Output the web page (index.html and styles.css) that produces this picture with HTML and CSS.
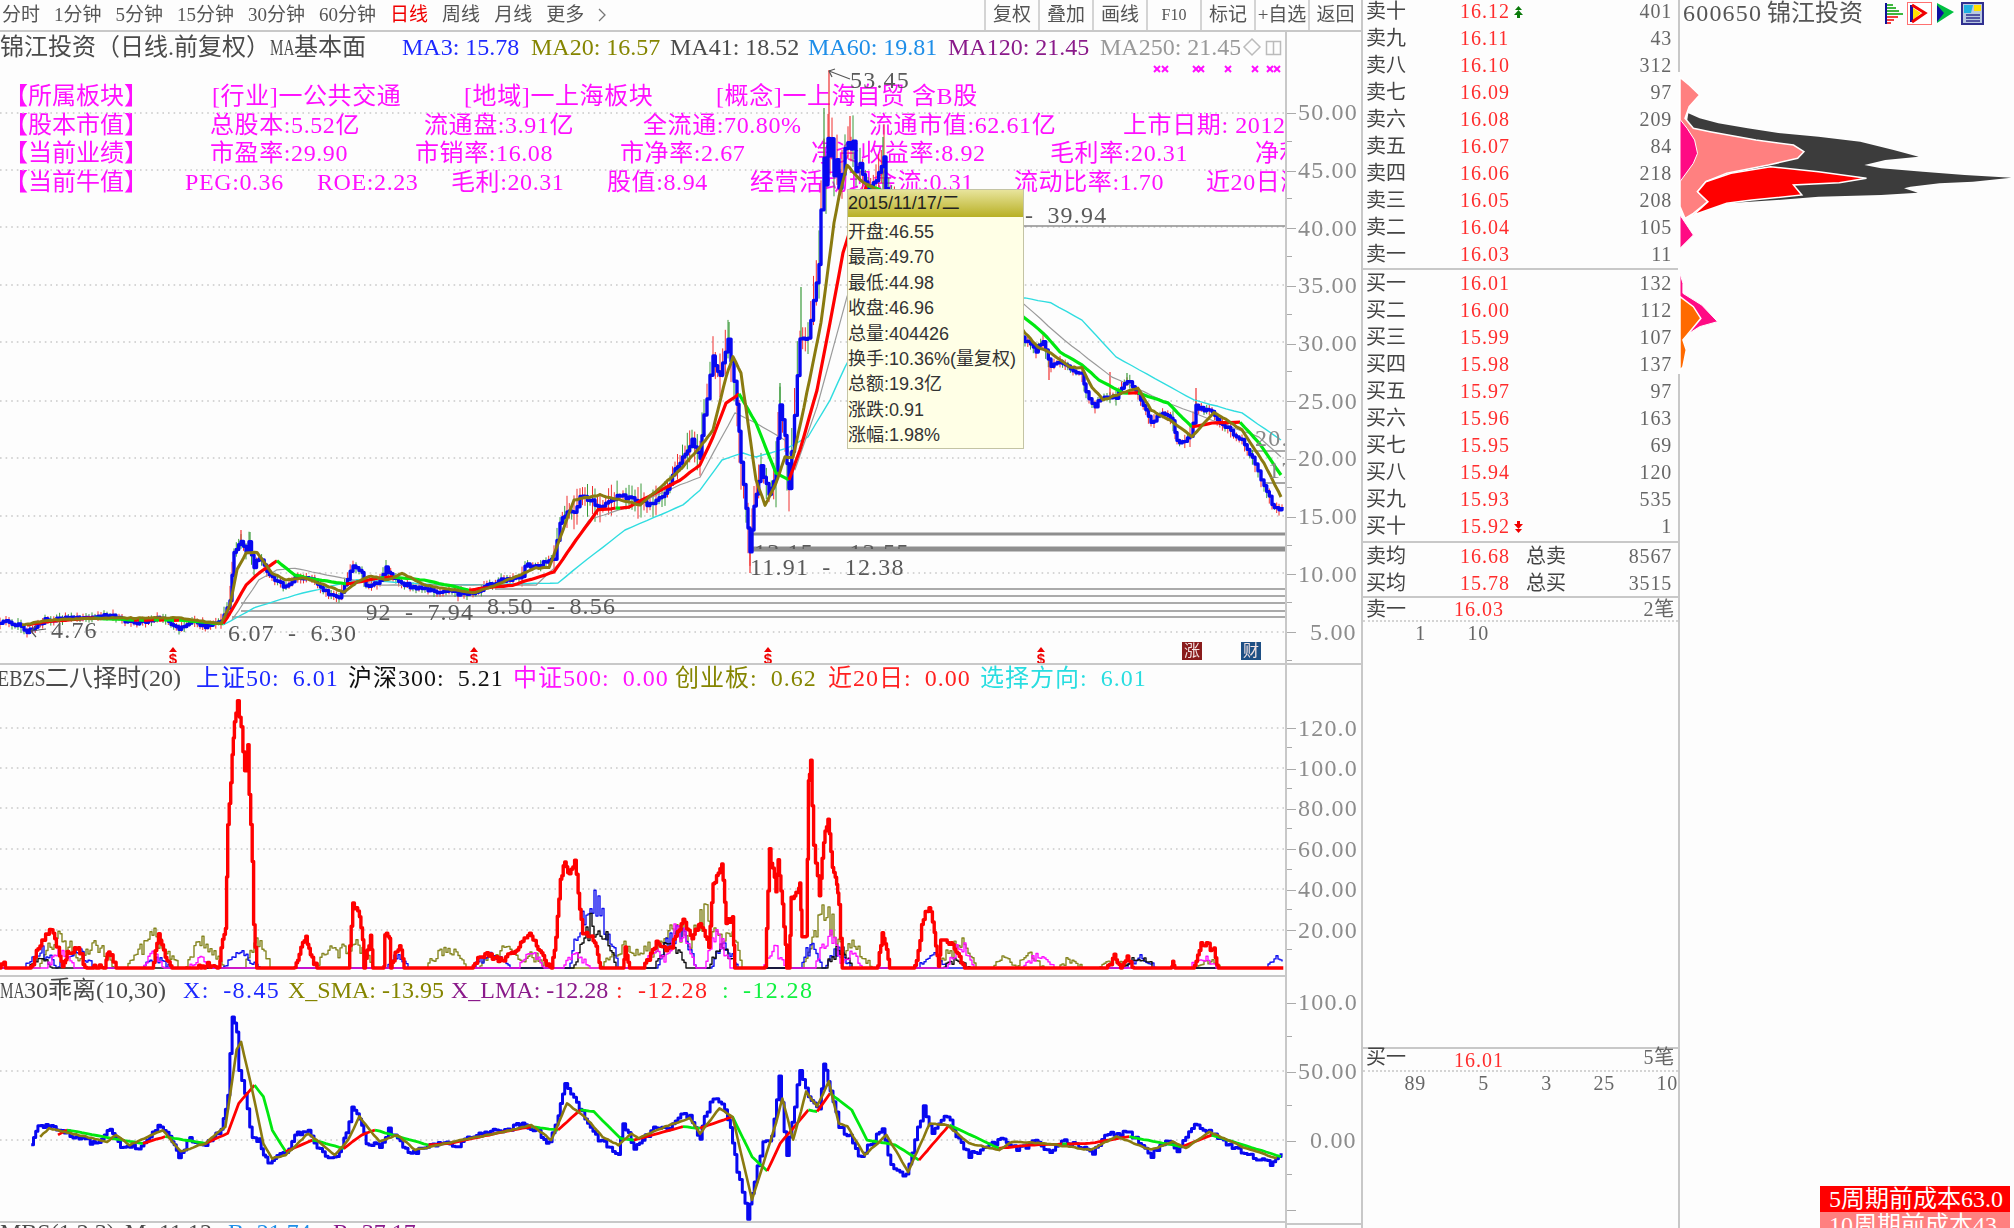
FILE: index.html
```html
<!DOCTYPE html>
<html lang="zh-CN">
<head>
<meta charset="utf-8">
<title>锦江投资 600650</title>
<link rel="stylesheet" href="styles.css">
</head>
<body>
<div class="app">
  <div class="left">
    <header class="toolbar">
      <nav class="periods">
        <span>分时</span><span>1分钟</span><span>5分钟</span><span>15分钟</span><span>30分钟</span><span>60分钟</span><span class="on">日线</span><span>周线</span><span>月线</span><span>更多</span><svg class="chev" viewBox="0 0 8 14"><path d="M1 1l6 6-6 6" fill="none" stroke="#777" stroke-width="1.300"/></svg>
      </nav>
      <nav class="tools">
        <span>复权</span><span>叠加</span><span>画线</span><span class="f10">F10</span><span>标记</span><span>+自选</span><span>返回</span>
      </nav>
    </header>

    <section class="pane p-main">
      <div class="plot">
        <div class="legend lg-main">
          <span class="c-ink">锦江投资（日线.前复权）<b class="narrow n-ma">MA</b>基本面</span>
          <span class="c-blue">MA3: 15.78</span>
          <span class="c-olive">MA20: 16.57</span>
          <span class="c-ink">MA41: 18.52</span>
          <span class="c-sky">MA60: 19.81</span>
          <span class="c-purple">MA120: 21.45</span>
          <span class="c-gray">MA250: 21.45</span>
        </div>
        <div class="info">
          <div class="info-row r1"><span>【所属板块】</span><span>[行业]一公共交通</span><span>[地域]一上海板块</span><span>[概念]一上海自贸 含B股</span></div>
          <div class="info-row r2"><span>【股本市值】</span><span>总股本:5.52亿</span><span>流通盘:3.91亿</span><span>全流通:70.80%</span><span>流通市值:62.61亿</span><span>上市日期: 2012</span></div>
          <div class="info-row r3"><span>【当前业绩】</span><span>市盈率:29.90</span><span>市销率:16.08</span><span>市净率:2.67</span><span>净资收益率:8.92</span><span>毛利率:20.31</span><span>净利</span></div>
          <div class="info-row r4"><span>【当前牛值】</span><span>PEG:0.36</span><span>ROE:2.23</span><span>毛利:20.31</span><span>股值:8.94</span><span>经营活动现金流:0.31</span><span>流动比率:1.70</span><span>近20日涨</span></div>
        </div>
        <svg class="chart" id="main-chart" viewBox="0 32 1285 631"></svg>

        <span class="anno a-53">53.45</span>
        <span class="anno a-476">4.76</span>
        <span class="anno a-607">6.07 - 6.30</span>
        <span class="anno a-850">8.50 - 8.56</span>
        <span class="anno a-792">7.92 - 7.94</span>
        <span class="anno a-1315">13.15 - 13.55</span>
        <span class="anno a-1191">11.91 - 12.38</span>
        <span class="anno a-3994">- 39.94</span>
        <span class="anno a-20">20.</span>
        <span class="anno a-17">17</span>

        <span class="mark m1">$</span><span class="mark m2">$</span><span class="mark m3">$</span><span class="mark m4">$</span>
        <span class="badge b-rise">涨</span><span class="badge b-fin">财</span>

        <div class="tip">
          <div class="tip-head">2015/11/17/二</div>
          <div class="tip-body">
            <div>开盘:46.55</div><div>最高:49.70</div><div>最低:44.98</div><div>收盘:46.96</div><div>总量:404426</div><div>换手:10.36%(量复权)</div><div>总额:19.3亿</div><div>涨跌:0.91</div><div>涨幅:1.98%</div>
          </div>
        </div>
      </div>
      <div class="axis ax-main">
        <div class="tick">50.00</div><div class="tick">45.00</div><div class="tick">40.00</div><div class="tick">35.00</div><div class="tick">30.00</div><div class="tick">25.00</div><div class="tick">20.00</div><div class="tick">15.00</div><div class="tick">10.00</div><div class="tick"><i>5.00</i></div>
      </div>
    </section>

    <section class="pane p-ind1">
      <div class="plot">
        <div class="legend lg-ind1">
          <span class="c-ink"><b class="narrow n-ebzs">EBZS</b>二八择时(20)</span>
          <span class="c-blue">上证50: 6.01</span>
          <span class="c-black">沪深300: 5.21</span>
          <span class="c-magenta">中证500: 0.00</span>
          <span class="c-olive">创业板: 0.62</span>
          <span class="c-red">近20日: 0.00</span>
          <span class="c-cyan">选择方向: 6.01</span>
        </div>
        <svg class="chart" id="ind1-chart" viewBox="0 665 1285 310"></svg>
      </div>
      <div class="axis ax-ind1">
        <div class="tick">120.0</div><div class="tick">100.0</div><div class="tick">80.00</div><div class="tick">60.00</div><div class="tick">40.00</div><div class="tick">20.00</div>
      </div>
    </section>

    <section class="pane p-ind2">
      <div class="plot">
        <div class="legend lg-ind2">
          <span class="c-ink"><b class="narrow n-ma">MA</b>30乖离(10,30)</span>
          <span class="c-blue sp">X: -8.45</span>
          <span class="c-olive">X_SMA: -13.95</span>
          <span class="c-purple">X_LMA: -12.28</span>
          <span class="c-red">:</span>
          <span class="c-red sp">-12.28</span>
          <span class="c-green">:</span>
          <span class="c-green sp">-12.28</span>
        </div>
        <svg class="chart" id="ind2-chart" viewBox="0 977 1285 244"></svg>
      </div>
      <div class="axis ax-ind2">
        <div class="tick">100.0</div><div class="tick">50.00</div><div class="tick"><i>0.00</i></div><div class="tick"></div>
      </div>
    </section>

    <section class="pane p-ind3">
      <div class="plot">
        <div class="legend lg-ind3">
          <span class="c-ink">MBS(1,2,3)</span>
          <span class="c-ink">M: 11.12</span>
          <span class="c-sky">B: 21.74</span>
          <span class="c-purple">R: 37.17</span>
        </div>
      </div>
      <div class="axis ax-ind3"></div>
    </section>
  </div>

  <aside class="book">
    <div class="asks">
      <div class="row"><span>卖十</span><span class="px">16.12<svg class="flag" viewBox="0 0 9 12"><path fill="#0a7a0a" d="M4.500 0L8 4H1zM4.500 4L9 9H6v3H3V9H0z"/></svg></span><span class="qty">401</span></div>
      <div class="row"><span>卖九</span><span class="px">16.11</span><span class="qty">43</span></div>
      <div class="row"><span>卖八</span><span class="px">16.10</span><span class="qty">312</span></div>
      <div class="row"><span>卖七</span><span class="px">16.09</span><span class="qty">97</span></div>
      <div class="row"><span>卖六</span><span class="px">16.08</span><span class="qty">209</span></div>
      <div class="row"><span>卖五</span><span class="px">16.07</span><span class="qty">84</span></div>
      <div class="row"><span>卖四</span><span class="px">16.06</span><span class="qty">218</span></div>
      <div class="row"><span>卖三</span><span class="px">16.05</span><span class="qty">208</span></div>
      <div class="row"><span>卖二</span><span class="px">16.04</span><span class="qty">105</span></div>
      <div class="row"><span>卖一</span><span class="px">16.03</span><span class="qty">11</span></div>
    </div>
    <div class="sep"></div>
    <div class="bids">
      <div class="row"><span>买一</span><span class="px">16.01</span><span class="qty">132</span></div>
      <div class="row"><span>买二</span><span class="px">16.00</span><span class="qty">112</span></div>
      <div class="row"><span>买三</span><span class="px">15.99</span><span class="qty">107</span></div>
      <div class="row"><span>买四</span><span class="px">15.98</span><span class="qty">137</span></div>
      <div class="row"><span>买五</span><span class="px">15.97</span><span class="qty">97</span></div>
      <div class="row"><span>买六</span><span class="px">15.96</span><span class="qty">163</span></div>
      <div class="row"><span>买七</span><span class="px">15.95</span><span class="qty">69</span></div>
      <div class="row"><span>买八</span><span class="px">15.94</span><span class="qty">120</span></div>
      <div class="row"><span>买九</span><span class="px">15.93</span><span class="qty">535</span></div>
      <div class="row"><span>买十</span><span class="px">15.92<svg class="flag" viewBox="0 0 9 12"><path fill="#f00000" d="M3 0h3v3h3L4.500 8 0 3h3zM1 8h7l-3.500 4z"/></svg></span><span class="qty">1</span></div>
    </div>
    <div class="sep"></div>
    <div class="avgs">
      <div class="row avg"><span>卖均</span><span class="px">16.68</span><span>总卖</span><span class="qty">8567</span></div>
      <div class="row avg"><span>买均</span><span class="px">15.78</span><span>总买</span><span class="qty">3515</span></div>
    </div>
    <div class="sep"></div>
    <div class="row queue"><span>卖一</span><span class="px">16.03</span><span class="qty">2笔</span></div>
    <div class="lots"><span>1</span><span>10</span></div>
    <div class="book-gap"></div>
    <div class="sep"></div>
    <div class="row queue queue-b"><span>买一</span><span class="px">16.01</span><span class="qty">5笔</span></div>
    <div class="lots"><span>89</span><span>5</span><span>3</span><span>25</span><span>10</span></div>
  </aside>

  <aside class="side">
    <div class="side-head">
      <span class="code">600650</span><span class="name">锦江投资</span>
      <div class="icons">
        <svg class="i1" viewBox="0 0 18 23"><path fill="none" stroke="#10109a" stroke-width="2" d="M1 1v21"/><path fill="none" stroke="#00a000" stroke-width="1.600" d="M2 3h6M2 6h9M2 9h12M2 12h16"/><path fill="none" stroke="#f00000" stroke-width="1.600" d="M2 15h11M2 18h7M2 21h4"/></svg>
        <svg class="i2" viewBox="0 0 25 23"><rect x=".5" y=".5" width="24" height="22" fill="#fff" stroke="#ff7070"/><path fill="#1010a0" d="M3 3h3v17H3z"/><path fill="#ffe000" d="M6 6l8 5-8 7z"/><path fill="none" stroke="#f00000" stroke-width="3" d="M5 3l13 8-13 9"/></svg>
        <svg class="i3" viewBox="0 0 19 23"><path fill="#00c040" d="M1 1l17 9L1 21z"/><path fill="#1010a0" d="M1 3l7 8-7 9z"/></svg>
        <svg class="i4" viewBox="0 0 23 23"><rect x="1" y="1" width="21" height="21" fill="#b8c8e0" stroke="#303090" stroke-width="2"/><path fill="#ffe000" d="M13 3h7v6h-7z"/><path fill="#20b0e0" d="M3 3h9l-2 8H3z"/><path stroke="#303090" stroke-width="1.500" d="M5 13h14M5 16h14M5 19h14"/></svg>
      </div>
    </div>
    <svg class="profile" viewBox="763.200 216 805.400 906" preserveAspectRatio="none">
      <polygon class="s-dark" points="788,340 815,355 860,370 930,385 1010,400 1100,410 1200,425 1280,450 1340,470 1260,480 1210,495 1250,505 1350,515 1450,525 1562,533 1470,545 1390,550 1320,560 1305,565 1338,578 1250,585 1100,590 1000,600 880,610 800,645 780,400"/>
      <polygon class="s-salmon" points="768,232 790,255 815,285 790,320 780,355 800,385 840,395 950,420 1040,435 1065,455 1050,475 980,495 880,520 830,545 810,575 835,605 800,640 780,655 768,620"/>
      <polygon class="s-pink" points="768,358 785,385 803,420 810,460 800,490 768,545"/>
      <polygon class="s-red" points="985,500 1100,515 1215,535 1150,548 1040,555 1060,585 940,600 880,610 800,645 835,605 810,575 830,545 890,520"/>
      <polygon class="s-pink" points="768,645 800,705 768,745"/>
      <polygon class="s-pink" points="768,820 775,850 775,880 820,915 858,965 815,980 790,1000 780,1005 768,1000"/>
      <polygon class="s-orange" points="768,890 800,920 818,955 785,1005 775,1020 783,1050 775,1100 768,1112"/>
    </svg>
    <div class="cost">
      <div class="cost-a">5周期前成本63.0</div>
      <div class="cost-b">10周期前成本43.</div>
    </div>
  </aside>
</div>
<script src="script.js"></script>
</body>
</html>
```
FILE: styles.css
```css
* { box-sizing: border-box; }
html, body { margin: 0; height: 1228px; overflow: hidden; background: #fdfdfd; }
body {
  font-family: "Liberation Serif", "Noto Sans CJK SC", serif;
  font-size: 24px;
  color: #4a4a4a;
}
.app { display: flex; width: 2014px; height: 1228px; filter: blur(.35px); }
.left { width: 1361px; flex: none; display: flex; flex-direction: column; }

/* toolbar */
.toolbar {
  height: 32px; flex: none; display: flex; justify-content: space-between;
  border-bottom: 2px solid #c8c8c8; font-size: 19px; line-height: 30px; color: #555;
}
.periods { display: flex; gap: 14px; padding-left: 2px; align-items: center; }
.periods .on { color: #f00000; }
.chev { width: 8px; height: 14px; flex: none; }
.tools { display: flex; }
.tools span { width: 54px; border-left: 2px solid #d4d4d4; text-align: center; }
.tools .f10 { font-size: 16px; }
.tools span:last-child { width: 53px; }

/* panes */
.pane { display: flex; flex: none; overflow: hidden; }
.p-main { height: 633px; border-bottom: 2px solid #c8c8c8; }
.p-ind1 { height: 312px; }
.p-ind2 { height: 246px; }
.p-ind3 { flex: 1; min-height: 0; }
.plot { position: relative; width: 1285px; flex: none; overflow: hidden; }
.p-ind1 .plot, .p-ind2 .plot { border-bottom: 2px solid #c8c8c8; }
.axis {
  width: 76px; flex: none; border-left: 2px solid #c8c8c8;
  letter-spacing: 1.2px; color: #8c8c8c; overflow: hidden;
}
.ax-main { padding-top: 52px; }
.ax-ind1 { padding-top: 43px; }
.ax-ind2 .tick:first-child { margin-top: -9px; }
.ax-ind3 { border-top: 2px solid #c8c8c8; }
.tick { position: relative; display: flex; align-items: center; padding-left: 11px; white-space: nowrap; }
.ax-main .tick { height: 57.7px; }
.ax-ind1 .tick { height: 40.4px; }
.ax-ind2 .tick { height: 69px; }
.tick i { font-style: normal; padding-left: 12px; }
.tick::before, .tick::after { content: ""; position: absolute; left: 0; height: 1px; background: #aaa; }
.tick::before { top: 50%; width: 9px; }
.tick::after { bottom: 0; width: 5px; }

/* legends */
.legend { display: flex; height: 30px; line-height: 30px; white-space: nowrap; position: relative; }
.legend span { flex: none; overflow: hidden; }
.narrow { display: inline-block; font-weight: normal; transform-origin: 0 50%; white-space: nowrap; }
.n-ma { width: 24px; transform: scaleX(.63); }
.n-ebzs { width: 48px; transform: scaleX(.83); }
.sp { letter-spacing: 1.4px; word-spacing: 6px; }
.lg-main span:nth-child(1) { width: 402px; }
.lg-main span:nth-child(2) { width: 129px; }
.lg-main span:nth-child(3) { width: 139px; }
.lg-main span:nth-child(4) { width: 138px; }
.lg-main span:nth-child(5) { width: 140px; }
.lg-main span:nth-child(6) { width: 152px; }
.lg-main span:nth-child(7) { width: 140px; }
.lg-ind1 { height: 27px; line-height: 27px; }
.lg-ind1 span { letter-spacing: 1px; word-spacing: 6px; }
.lg-ind1 span:nth-child(1) { width: 196px; letter-spacing: 0; margin-left: -3px; padding-left: 0; }
.lg-ind1 span:nth-child(2) { width: 155px; margin-left: 3px; }
.lg-ind1 span:nth-child(3) { width: 165px; margin-left: -3px; }
.lg-ind1 span:nth-child(4) { width: 162px; }
.lg-ind1 span:nth-child(5) { width: 153px; }
.lg-ind1 span:nth-child(6) { width: 152px; }
.lg-ind2 { height: 26px; line-height: 26px; }
.lg-ind2 span:nth-child(1) { width: 183px; }
.lg-ind2 span:nth-child(2) { width: 105px; }
.lg-ind2 span:nth-child(3) { width: 163px; }
.lg-ind2 span:nth-child(4) { width: 165px; }
.lg-ind2 span:nth-child(5) { width: 22px; }
.lg-ind2 span:nth-child(6) { width: 84px; }
.lg-ind2 span:nth-child(7) { width: 21px; }
.lg-ind3 { height: 27px; line-height: 27px; margin-top: -4px; }
.lg-ind3 span:nth-child(1) { width: 125px; }
.lg-ind3 span:nth-child(2) { width: 103px; }
.lg-ind3 span:nth-child(3) { width: 105px; }

.c-ink { color: #4a4a4a; }
.c-black { color: #111; }
.c-blue { color: #1c28ff; }
.c-olive { color: #858500; }
.c-sky { color: #1e8ee8; }
.c-purple { color: #8a1a8a; }
.c-gray { color: #999; }
.c-magenta { color: #ff14ff; }
.c-red { color: #ff2020; }
.c-green { color: #10f040; }
.c-cyan { color: #28dde0; }

/* info block */
.info { position: absolute; left: 4px; top: 50px; width: 1281px; color: #ff10ff; white-space: nowrap; }
.info-row { display: flex; height: 28.5px; line-height: 28.5px; letter-spacing: .6px; }
.info-row span { flex: none; }
.info-row span:first-child { letter-spacing: 0; }
.r1 span:nth-child(1) { width: 208px; }
.r1 span:nth-child(2), .r1 span:nth-child(3) { width: 252px; }
.r2 span:nth-child(1) { width: 206px; }
.r2 span:nth-child(2) { width: 214px; }
.r2 span:nth-child(3) { width: 219px; }
.r2 span:nth-child(4) { width: 226px; }
.r2 span:nth-child(5) { width: 254px; }
.r3 span:nth-child(1) { width: 206px; }
.r3 span:nth-child(2), .r3 span:nth-child(3), .r3 span:nth-child(6) { width: 205px; }
.r3 span:nth-child(4) { width: 191px; }
.r3 span:nth-child(5) { width: 239px; }
.r4 span:nth-child(1) { width: 181px; }
.r4 span:nth-child(2) { width: 132px; }
.r4 span:nth-child(3) { width: 134px; }
.r4 span:nth-child(4) { width: 156px; }
.r4 span:nth-child(5) { width: 143px; }
.r4 span:nth-child(6) { width: 264px; }
.r4 span:nth-child(7) { width: 192px; }

/* chart surface */
.chart { position: absolute; left: 0; top: 0; width: 1285px; height: 100%; display: block; }

/* annotations over the chart */
.anno { position: absolute; line-height: 26px; letter-spacing: 1.2px; word-spacing: 6px; color: #5a5a5a; white-space: nowrap; }
.a-53 { left: 850px; top: 35px; }
.a-476 { left: 51px; top: 585px; }
.a-607 { left: 228px; top: 588px; }
.a-850 { left: 487px; top: 561px; }
.a-792 { left: 345px; top: 567px; clip-path: inset(0 0 0 22px); }
.a-1315 { left: 754px; top: 507px; height: 10px; overflow: hidden; }
.a-1191 { left: 750px; top: 522px; }
.a-3994 { left: 1025px; top: 170px; }
.a-20 { left: 1255px; top: 393px; color: #888; }
.a-17 { left: 1268px; top: 425px; color: #888; }

.mark {
  position: absolute; top: 615px; width: 12px; text-align: center;
  font: bold 15px/13px "Liberation Sans", sans-serif; color: #f00000; padding-top: 5px;
}
.mark::before {
  content: ""; position: absolute; left: 2px; top: 0;
  border: 4px solid transparent; border-top: 0; border-bottom: 5px solid #f00000;
}
.m1 { left: 167px; } .m2 { left: 468px; } .m3 { left: 762px; } .m4 { left: 1035px; }
.badge {
  position: absolute; top: 610px; width: 20px; height: 18px; color: #f4e4e4;
  font-size: 16px; line-height: 18px; text-align: center;
}
.b-rise { left: 1182px; background: #8a1c1c; }
.b-fin { left: 1241px; background: #1e4f84; }

/* tooltip */
.tip {
  position: absolute; left: 847px; top: 157px; width: 177px; height: 260px;
  border: 1px solid #c4c4a4; background: #ffffe6; color: #333;
  font: 18px/25.4px "Liberation Sans", "Noto Sans CJK SC", sans-serif; white-space: nowrap;
}
.tip-head { height: 27px; line-height: 27px; background: linear-gradient(#e8e49c, #b8b024); color: #222; }
.tip-body { padding-top: 3px; }

/* order book */
.book {
  width: 319px; flex: none; height: 1228px; display: flex; flex-direction: column;
  border-left: 2px solid #c8c8c8; border-right: 2px solid #c8c8c8;
  font-size: 20px; color: #444;
}
.asks { height: 270px; margin-top: -2px; flex: none; }
.bids { height: 271px; flex: none; }
.avgs { height: 53px; flex: none; }
.sep { height: 2px; background: #c8c8c8; flex: none; }
.row { display: grid; grid-template-columns: 94px 66px 1fr; height: 27px; line-height: 27px; padding: 0 6px 0 3px; white-space: nowrap; }
.px { color: #ff2c2c; letter-spacing: 1px; display: flex; align-items: center; }
.qty { text-align: right; color: #666; letter-spacing: .8px; }
.flag { width: 9px; height: 12px; margin-left: 4px; flex: none; }
.avg { height: 26.5px; line-height: 26px; grid-template-columns: 94px 66px 60px 1fr; }
.queue { height: 24px; line-height: 23px; grid-template-columns: 88px 66px 1fr; padding-right: 3px; border-bottom: 2px dotted #d4d4d4; flex: none; }
.queue-b { height: 23px; line-height: 16px; }
.lots { display: grid; grid-template-columns: repeat(5, 63px); height: 22px; line-height: 22px; flex: none; color: #666; letter-spacing: .8px; }
.lots span { text-align: right; }
.book-gap { height: 403px; flex: none; }

/* side panel */
.side { flex: 1; min-width: 0; display: flex; flex-direction: column; position: relative; }
.side-head { height: 72px; flex: none; display: flex; align-items: flex-start; padding: 0 0 0 3px; line-height: 27px; color: #555; white-space: nowrap; }
.code { width: 84px; letter-spacing: 1.2px; }
.name { width: 118px; }
.icons { display: flex; align-items: center; height: 24px; padding-top: 3px; }
.icons svg { flex: none; height: 23px; display: block; }
.i1 { width: 18px; margin-right: 4px; }
.i2 { width: 25px; margin-right: 4px; }
.i3 { width: 19px; margin-right: 6px; }
.i4 { width: 23px; }
.profile { width: 336px; height: 302px; margin-left: -2px; background: #fdfdfd; display: block; flex: none; position: relative; }
.profile polygon { vector-effect: non-scaling-stroke; }
.s-dark { fill: #3c3c3c; }
.s-salmon { fill: #ff8080; stroke: #fff; stroke-width: 1.5; }
.s-pink { fill: #ff0a84; stroke: #fff; stroke-width: 1; }
.s-red { fill: #ff0000; stroke: #fff; stroke-width: 1.5; }
.s-orange { fill: #ff6a00; stroke: #fff; stroke-width: 1.5; }
.cost { margin-top: auto; align-self: flex-end; width: 190px; margin-right: 4px; color: #fff; white-space: nowrap; overflow: hidden; height: 42px; flex: none; }
.cost-a, .cost-b { height: 26px; line-height: 26px; padding-left: 9px; }
.cost-a { background: #ff0000; }
.cost-b { background: #ff8080; }
```
FILE: script.js
```js
(function () {
  var seed = 20151117;
  function r() {
    seed = (seed * 1664525 + 1013904223) >>> 0;
    return seed / 4294967296;
  }
  function zm(x0, k, y0, a) {
    var out = [];
    for (var i = 0; i < a.length; i += 2) out.push([x0 + a[i] / k, y0 + a[i + 1] / 3]);
    return out;
  }
  function pairs(a) { return zm(0, 1, 0, a.map(function (v, i) { return i % 2 ? v * 3 : v; })); }
  function dens(p, step, amp, keepFlat) {
    var o = [];
    for (var i = 0; i < p.length - 1; i++) {
      var a = p[i], b = p[i + 1], n = Math.max(1, Math.ceil((b[0] - a[0]) / step));
      var flat = keepFlat && a[1] === b[1];
      for (var j = 0; j < n; j++) {
        var t = j / n, d = flat ? 0 : (r() - 0.5) * 2 * amp;
        o.push([a[0] + (b[0] - a[0]) * t, a[1] + (b[1] - a[1]) * t + d]);
      }
    }
    o.push(p[p.length - 1]);
    return o;
  }
  function stair(p) {
    var o = [];
    for (var i = 0; i < p.length; i++) {
      o.push(p[i]);
      if (i < p.length - 1) o.push([p[i + 1][0], p[i][1]]);
    }
    return o;
  }
  function line(p, c, w) {
    var s = p.map(function (q) { return q[0].toFixed(1) + ',' + q[1].toFixed(1); }).join(' ');
    return '<polyline points="' + s + '" fill="none" stroke="' + c + '" stroke-width="' + w + '" stroke-linejoin="round"/>';
  }
  function seg(x1, y1, x2, y2, c, w, dash) {
    return '<line x1="' + x1 + '" y1="' + y1 + '" x2="' + x2 + '" y2="' + y2 + '" stroke="' + c + '" stroke-width="' + w + '"' + (dash ? ' stroke-dasharray="' + dash + '"' : '') + '/>';
  }
  function redGreen(p, w) {
    var html = '', run = [p[0]], up = true;
    for (var i = 1; i < p.length; i++) {
      var u = p[i][1] <= p[i - 1][1];
      if (u !== up && run.length > 1) {
        html += line(run, up ? '#ff0000' : '#00e810', w);
        run = [p[i - 1]];
      }
      up = u;
      run.push(p[i]);
    }
    return html + line(run, up ? '#ff0000' : '#00e810', w);
  }
  function grid(ys) {
    return ys.map(function (y) { return seg(0, y, 1285, y, '#c9c9c9', 1.6, '1.6 4'); }).join('');
  }

  /* ---------- main price chart ---------- */
  var blue = pairs([0,622,9,621,27,631,38,625,45,620,80,618,107,615,134,623,163,617,179,629,192,622,208,627,221,622,230,600,234,553,241,540,246,552,249,542,254,568,259,557,272,578,286,587,295,577,312,578,326,592,339,597,353,565,362,573,366,585,377,585,386,568,393,578,413,588,455,593,473,593,484,587,504,580,522,578,525,565,538,565,554,560,560,523,567,510,574,513,580,497,590,500,600,507,620,495,650,505,665,495,675,470,685,455,692,440,700,457,704,417,713,357,720,377,728,340,737,403,741,463,746,507,750,553,754,507,761,467,769,493,776,473,780,403,785,437,789,490,800,340,808,337,819,263,821,210,824,160,826,185,828,137,830,155,832,140,834,175,837,160,839,187,842,175,845,150,848,142,851,150,853,140,856,173,860,165,868,190,876,180,884,157,886,187,900,215,950,250,1000,300,1025,340,1036,350,1043,340,1051,367,1060,363,1073,370,1082,373,1086,393,1095,408,1101,397,1116,397,1127,380,1138,393,1151,423,1160,413,1173,420,1177,442,1190,438,1196,407,1212,413,1225,427,1242,440,1255,463,1264,487,1272,503,1279,511,1282,507]);
  var olive = pairs([22,625,49,620,112,618,179,618,221,624,230,605,237,570,246,553,257,552,272,573,286,580,304,578,344,592,357,582,371,576,388,580,402,573,424,585,473,593,491,587,536,568,549,568,563,530,574,500,600,495,640,505,680,470,700,447,713,430,726,377,733,357,741,373,748,423,756,480,765,505,776,483,785,457,793,457,804,407,821,323,834,223,839,197,847,165,860,180,880,192,1000,300,1025,333,1038,347,1051,353,1069,367,1082,368,1092,387,1103,400,1123,393,1138,388,1151,410,1173,422,1192,437,1214,412,1242,430,1264,463,1281,497]);
  var rg = pairs([27,625,45,622,89,618,134,620,179,620,223,624,232,610,246,585,259,573,277,561,295,575,312,579,346,584,380,578,393,577,424,580,469,590,513,585,554,572,576,540,598,510,629,507,680,480,700,465,713,437,726,403,739,394,756,423,776,473,789,480,800,450,817,390,830,323,843,253,855,215,867,185,880,190,1000,300,1025,318,1043,333,1060,352,1082,365,1099,380,1123,393,1138,393,1168,403,1192,427,1212,423,1240,422,1259,443,1281,475]);
  var gray = pairs([232,620,259,580,277,570,295,568,312,572,379,585,536,585,563,560,589,520,634,505,680,485,700,477,735,413,756,423,785,440,795,470,817,407,847,297,880,210,1025,305,1064,340,1112,377,1168,403,1212,420,1259,437,1281,457]);
  var cyan = pairs([223,625,254,608,295,595,357,580,446,585,558,583,580,565,625,530,683,505,700,490,722,460,743,453,756,457,787,448,808,437,830,400,845,367,880,300,1025,298,1051,303,1082,320,1116,357,1194,400,1242,413,1281,440]);

  var m = grid([113, 170, 227, 285, 342, 401, 458, 516, 573, 632]);
  [[495,589,1.6],[340,596,1.6],[241,603,1.6],[241,611,1.6],[232,617,1.6],[752,534,3],[752,549,5],[1024,226,1.6],[1250,451,1.6],[1265,483,1.6]].forEach(function (b) {
    m += seg(b[0], b[1], 1285, b[1], '#8e8e8e', b[2]);
  });
  var bs = dens(blue, 3.1, 2);
  bs.forEach(function (q, i) {
    var nx = bs[Math.min(i + 1, bs.length - 1)];
    var big = q[0] > 560 && q[0] < 900 ? 5 : 1;
    var h = 2 + r() * 3 * big + Math.abs(nx[1] - q[1]) * 0.5;
    m += seg(q[0].toFixed(1), (q[1] - h).toFixed(1), q[0].toFixed(1), (q[1] + h).toFixed(1), r() < 0.55 ? '#f03030' : '#3a9a3a', 1);
  });
  [[829,70,140,'#f03030'],[824,108,165,'#3a9a3a'],[850,116,150,'#f03030'],[883,137,190,'#3a9a3a'],[801,287,340,'#3a9a3a'],[780,383,420,'#3a9a3a'],[729,322,350,'#3a9a3a'],[1196,388,410,'#f03030'],[1127,373,385,'#3a9a3a'],[1110,372,395,'#f03030'],[1049,355,380,'#f03030'],[250,532,552,'#3a9a3a'],[241,530,545,'#f03030'],[750,553,573,'#f03030']].forEach(function (w) {
    m += seg(w[0], w[1], w[0], w[2], w[3], 1.2);
  });
  m += line(dens(cyan, 8, 0.2), '#30dde0', 1.4);
  m += line(dens(gray, 8, 0.3), '#9a9a9a', 1.2);
  m += line(stair(bs), '#0808f0', 3.4);
  m += redGreen(dens(rg, 5, 0.3), 3.2);
  m += line(dens(olive, 3.1, 0.5), '#8a7a10', 3);
  /* high / low arrows */
  m += seg(829, 71, 850, 79, '#555', 1.2) + seg(829, 71, 835, 69, '#555', 1.2) + seg(829, 71, 832, 77, '#555', 1.2);
  m += seg(31, 631, 46, 629, '#555', 1.2) + seg(31, 631, 36, 626, '#555', 1.2) + seg(31, 631, 36, 637, '#555', 1.2);
  /* flags along the top and end-of-legend glyphs */
  [1157,1165,1196,1201,1228,1255,1270,1277].forEach(function (x) {
    m += seg(x - 3, 66, x + 3, 72, '#ff10ff', 2) + seg(x - 3, 72, x + 3, 66, '#ff10ff', 2);
  });
  m += '<polygon points="1252,39 1260,47 1252,55 1244,47" fill="none" stroke="#bbb" stroke-width="1.5"/>';
  m += '<rect x="1266.500" y="41.500" width="14" height="13" fill="none" stroke="#bbb" stroke-width="1.500"/>' + seg(1273.5, 42, 1273.5, 54, '#bbb', 1.5);
  document.getElementById('main-chart').innerHTML = m;

  /* ---------- 二八择时 indicator ---------- */
  var base = 968;
  var red1 = zm(0, 2.24, 660, [0,925,5,905,12,925,70,925,85,860,115,800,130,870,140,915,150,880,175,860,190,920,235,925,240,875,250,890,260,925,340,925,355,830,370,890,385,925,445,925,465,915,490,925,495,870,505,800,510,500,520,290,525,180,532,125,540,210,548,330,555,250,558,400,565,600,568,800,575,925,660,925,670,880,685,830,695,890,710,925,780,925,790,730,805,765,812,830,815,925,830,830,835,925,860,925,862,825,872,830,875,925,885,880,895,855,905,925,970,925,1060,925,1070,890,1090,880,1120,900,1150,880,1170,840,1190,825,1205,860,1220,900,1235,925,1245,830,1255,660,1265,610,1275,650,1287,600,1295,700,1305,830,1325,820,1335,860,1345,925,1395,925,1400,860,1410,925,1440,925,1470,850,1500,870,1530,780,1550,830])
    .concat(zm(700, 2.306, 660, [0,790,20,860,30,670,50,610,60,790,75,770,80,925,150,925,160,575,175,690,180,600,190,730,200,925,205,925,210,710,225,700,230,660,235,830,245,830,250,370,255,310,262,560,275,700,285,540,295,470,305,620,315,670,320,740,328,925,410,925,420,810,430,860,437,925,495,925,515,770,528,735,540,820,550,925,555,840,570,840,590,870,610,925,940,925,955,890,970,925,985,885,1000,925,1085,925,1090,905,1095,925,1140,925,1155,845,1185,870,1195,925,1345,925]));
  function bumps(list, c) {
    var p = [];
    for (var x = 0; x <= 1283; x += 2) {
      var v = 0;
      list.forEach(function (b) {
        var t = 1 - Math.abs(x - b[0]) / ((b[2] || 14) * 1.3);
        if (t > 0) v = Math.max(v, b[1] * Math.pow(t, 0.7));
      });
      v = v > 0 ? Math.max(0, v * (0.5 + 0.5 * r()) + (r() - 0.5) * 5) : 0;
      p.push([x, base - v]);
    }
    return line(stair(p), c, 1.4);
  }
  var i1 = grid([728, 768, 808, 849, 889, 930]);
  i1 += bumps([[60,45,16],[94,33,14],[152,43,20],[201,37,12],[210,27,10],[257,33,10],[330,25,12],[344,30,10],[357,30,12],[446,27,15],[504,25,20],[531,18,12],[625,30,18],[647,30,12],[674,55,20],[704,70,16],[726,50,12],[824,80,16],[852,30,14],[951,25,10],[960,35,12],[1004,15,8],[1030,18,10],[1069,10,10],[1112,10,10],[1207,10,10]], '#858520');
  i1 += bumps([[40,25,12],[76,22,14],[156,12,10],[241,18,14],[397,15,8],[491,18,14],[585,70,12],[594,85,18],[670,40,10],[679,50,12],[724,30,10],[811,30,8],[837,25,10],[932,18,10],[1140,14,12],[1277,13,8]], '#1010f0');
  i1 += bumps([[40,18,8],[594,65,16],[670,35,12],[722,30,10],[839,25,10],[956,10,10],[1138,13,12]], '#101010');
  i1 += bumps([[60,25,10],[152,20,8],[200,15,8],[531,20,10],[576,18,10],[656,25,10],[679,55,12],[717,45,10],[774,25,8],[828,45,10],[850,20,8],[960,30,10],[1038,17,12],[1203,15,10]], '#ff10ff');
  var rd = dens(red1, 2, 3.2, true).map(function (q) { return [q[0], Math.min(q[1], base)]; });
  i1 += line(stair(rd), '#ff0000', 3.4);
  document.getElementById('ind1-chart').innerHTML = i1;

  /* ---------- MA30 乖离 indicator ---------- */
  var xb = zm(0, 2.24, 970, [70,530,85,470,120,470,150,490,190,510,220,525,240,475,270,525,310,530,360,465,385,510,400,560,425,505,460,525,495,480,510,380,520,135,530,190,535,300,548,370,565,510,580,510,590,560,605,580,620,550,640,550,660,495,690,475,710,530,735,560,760,550,775,490,788,405,805,440,820,520,850,530,870,480,890,510,920,555,950,530,1000,515,1020,535,1060,495,1130,480,1170,460,1200,480,1230,520,1250,430,1265,345,1285,380,1310,440,1340,510,1385,550,1395,460,1420,530,1470,470,1500,480,1525,430,1545,440])
    .concat(zm(700, 2.306, 970, [0,510,10,440,30,385,50,400,70,480,85,600,110,740,125,630,145,520,165,500,182,325,200,560,230,300,250,375,275,425,285,280,300,360,320,470,345,500,365,565,400,510,420,470,440,590,475,620,495,510,515,415,535,490,570,435,590,500,620,555,660,530,700,505,730,540,780,510,800,545,840,515,880,530,905,550,940,490,990,490,1040,555,1080,510,1100,540,1140,460,1180,490,1220,525,1290,570,1315,580,1340,550]));
  var xo = zm(0, 2.24, 970, [90,500,110,475,240,515,260,495,290,525,365,480,405,545,460,520,505,470,530,240,540,215,560,330,590,520,610,565,640,555,690,490,750,555,780,510,805,440,850,515,890,495,930,540,1000,520,1130,485,1190,465,1235,510,1270,400,1310,440,1350,500,1385,525,1415,490,1430,505,1490,470,1545,445])
    .concat(zm(700, 2.306, 970, [0,490,45,415,75,440,120,690,175,460,190,385,215,510,245,365,270,410,297,335,320,460,340,470,380,555,430,495,480,605,530,460,570,465,620,520,690,540,720,515,800,520,900,540,960,500,1040,540,1090,515,1120,535,1175,485,1250,530,1330,565]));
  var xg = zm(0, 2.24, 970, [130,495,150,480,250,505,320,520,370,500,460,520,510,490,535,400,570,345,590,380,610,480,640,545,700,510,770,535,810,495,840,480,960,525,1010,520,1130,485,1190,470,1250,480,1300,420,1330,425,1390,505,1420,510,1530,470])
    .concat(zm(700, 2.306, 970, [0,475,75,440,120,560,155,603,185,520,250,420,270,425,300,370,350,420,385,510,450,525,505,570,575,465,690,535,760,525,900,520,990,500,1110,530,1180,495,1340,560]));
  var i2 = grid([1071, 1140]);
  i2 += line(stair(dens(xb, 3.1, 2.6)), '#0808f0', 3);
  i2 += redGreen(dens(xg, 5, 0.2), 2.8);
  i2 += line(dens(xo, 3.1, 0.5), '#8a7a10', 2.6);
  document.getElementById('ind2-chart').innerHTML = i2;
})();
```
